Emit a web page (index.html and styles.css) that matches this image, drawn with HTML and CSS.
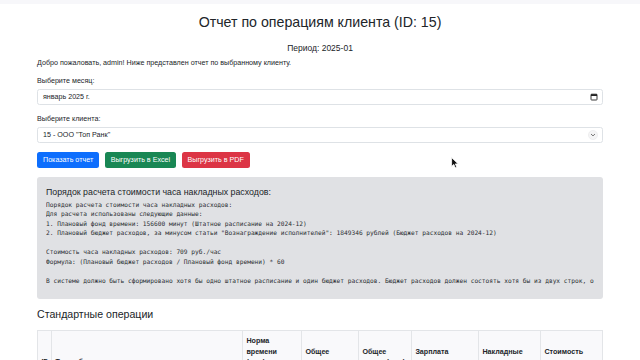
FILE: index.html
```html
<!DOCTYPE html>
<html lang="ru">

<head>
  <meta charset="UTF-8" />
  <meta name="viewport" content="width=device-width, initial-scale=1.0" />
  <title>Отчет по операциям клиента</title>
  <link rel="stylesheet" href="styles.css">
</head>

<body>
  <div class="topbar"></div>
  <div class="container">
    <h2 class="title">Отчет по операциям клиента (ID: 15)</h2>
    <h5 class="period">Период: 2025-01</h5>
    <p class="welcome">Добро пожаловать, admin! Ниже представлен отчет по выбранному клиенту.</p>

    <form class="filters">
      <div class="field">
        <label class="form-label">Выберите месяц:</label>
        <div class="form-control">
          <span>январь 2025 г.</span>
          <svg class="ctrl-icon" width="8" height="8" viewBox="0 0 8 8">
            <rect x="1" y="1.2" width="6" height="5.8" rx="0.6" fill="none" stroke="#222" stroke-width="0.9" />
            <rect x="1" y="1.2" width="6" height="1.8" fill="#222" />
          </svg>
        </div>
      </div>
      <div class="field">
        <label class="form-label">Выберите клиента:</label>
        <div class="form-control">
          <span>15 - ООО "Топ Ранк"</span>
          <svg class="ctrl-icon" width="10" height="10" viewBox="0 0 10 10">
            <circle cx="5" cy="5" r="4.6" fill="#f4f4f5" stroke="#e4e4e6" stroke-width="0.5" />
            <path d="M3.3 4.3 L5 5.9 L6.7 4.3" fill="none" stroke="#555" stroke-width="0.8" stroke-linecap="round" />
          </svg>
        </div>
      </div>
      <div class="buttons">
        <button type="button" class="btn btn-primary">Показать отчет</button>
        <button type="button" class="btn btn-success">Выгрузить в Excel</button>
        <button type="button" class="btn btn-danger">Выгрузить в PDF</button>
      </div>
    </form>

    <div class="calc-box">
      <h5 class="calc-title">Порядок расчета стоимости часа накладных расходов:</h5>
      <pre class="calc-text">Порядок расчета стоимости часа накладных расходов:
Для расчета использованы следующие данные:
1. Плановый фонд времени: 156600 минут (Штатное расписание на 2024-12)
2. Плановый бюджет расходов, за минусом статьи "Вознаграждение исполнителей": 1849346 рублей (Бюджет расходов на 2024-12)

Стоимость часа накладных расходов: 709 руб./час
Формула: (Плановый бюджет расходов / Плановый фонд времени) * 60

В системе должно быть сформировано хотя бы одно штатное расписание и один бюджет расходов. Бюджет расходов должен состоять хотя бы из двух строк, о</pre>
    </div>

    <h4 class="section-title">Стандартные операции</h4>
    <table class="ops-table">
      <thead>
        <tr>
          <th class="c-id">ID</th>
          <th class="c-type">Тип работы</th>
          <th class="c-norm">Норма времени (мин)</th>
          <th class="c-qty">Общее количество</th>
          <th class="c-time">Общее время (мин)</th>
          <th class="c-pay">Зарплата исполнителя</th>
          <th class="c-over">Накладные расходы</th>
          <th class="c-cost">Стоимость операции</th>
        </tr>
      </thead>
    </table>
  </div>

  <svg class="cursor" width="8" height="12" viewBox="0 0 8 12">
    <path d="M0.6 0.6 L0.6 9.4 L2.8 7.4 L4.3 10.8 L5.8 10.1 L4.3 6.9 L7.2 6.9 Z" fill="#111" stroke="#fff" stroke-width="0.8" />
  </svg>
</body>

</html>
```

FILE: styles.css
```css
body {
  margin: 0;
  font-family: "Liberation Sans", Arial, sans-serif;
  font-size: 7.15px;
  line-height: 10px;
  color: #212529;
  background-color: #fff;
}

.topbar {
  height: 4px;
  background-color: #f7f7fa;
}

.container {
  width: 566px;
  margin: 0 auto;
}

.title {
  margin: 10px 0 13px;
  font-size: 14.2px;
  line-height: 16px;
  font-weight: 400;
  text-align: center;
}

.period {
  margin: 0;
  font-size: 8.5px;
  line-height: 10px;
  font-weight: 400;
  text-align: center;
}

.welcome {
  margin: 5px 0 0;
}

/* Form */
.filters {
  margin: 0;
}

.field {
  margin-top: 8px;
}

.field+.field {
  margin-top: 9px;
}

.form-label {
  display: block;
  margin-bottom: 3px;
}

.form-control {
  display: flex;
  align-items: center;
  justify-content: space-between;
  height: 16px;
  padding: 0 4px 0 5px;
  border: 1px solid #dee2e6;
  border-radius: 2.5px;
  box-sizing: border-box;
  background-color: #fff;
}

.ctrl-icon {
  display: block;
}

.buttons {
  display: flex;
  gap: 5.5px;
  margin-top: 9px;
}

.btn {
  height: 16px;
  padding: 0 5px;
  border: 1px solid transparent;
  border-radius: 2.5px;
  font-family: inherit;
  font-size: 7.15px;
  line-height: 10px;
  color: #fff;
}

.btn-primary {
  background-color: #0d6efd;
}

.btn-success {
  background-color: #198754;
}

.btn-danger {
  background-color: #dc3545;
}

/* Calculation info */
.calc-box {
  margin-top: 9px;
  height: 122px;
  padding: 10px 5px 0 9px;
  box-sizing: border-box;
  background-color: #e0e1e4;
  border-radius: 3px;
  overflow: hidden;
}

.calc-title {
  margin: 0;
  font-size: 8.8px;
  line-height: 10px;
  font-weight: 400;
}

.calc-text {
  margin: 2.5px 0 0;
  font-family: "DejaVu Sans Mono", monospace;
  font-size: 6.2px;
  line-height: 9.5px;
  color: #2b2f33;
  white-space: pre;
  overflow: hidden;
}

.section-title {
  margin: 8.5px 0 0;
  font-size: 10.6px;
  line-height: 13px;
  font-weight: 400;
}

/* Table */
.ops-table {
  margin-top: 9.5px;
  width: 566px;
  table-layout: fixed;
  border-collapse: collapse;
  background-color: #f9f9fb;
}

.ops-table th {
  box-sizing: border-box;
  padding: 5px 3.4px 3.4px;
  border: 1px solid #e3e5e8;
  font-size: 7.15px;
  font-weight: 700;
  text-align: left;
  vertical-align: bottom;
  line-height: 10.5px;
}

.c-id {
  width: 14px;
}

.c-type {
  width: 191px;
}

.c-norm {
  width: 59px;
}

.c-qty {
  width: 57px;
}

.c-time {
  width: 53px;
}

.c-pay {
  width: 67px;
}

.c-over {
  width: 62px;
}

.c-cost {
  width: 62px;
}

.cursor {
  position: absolute;
  left: 451px;
  top: 157px;
}
```
